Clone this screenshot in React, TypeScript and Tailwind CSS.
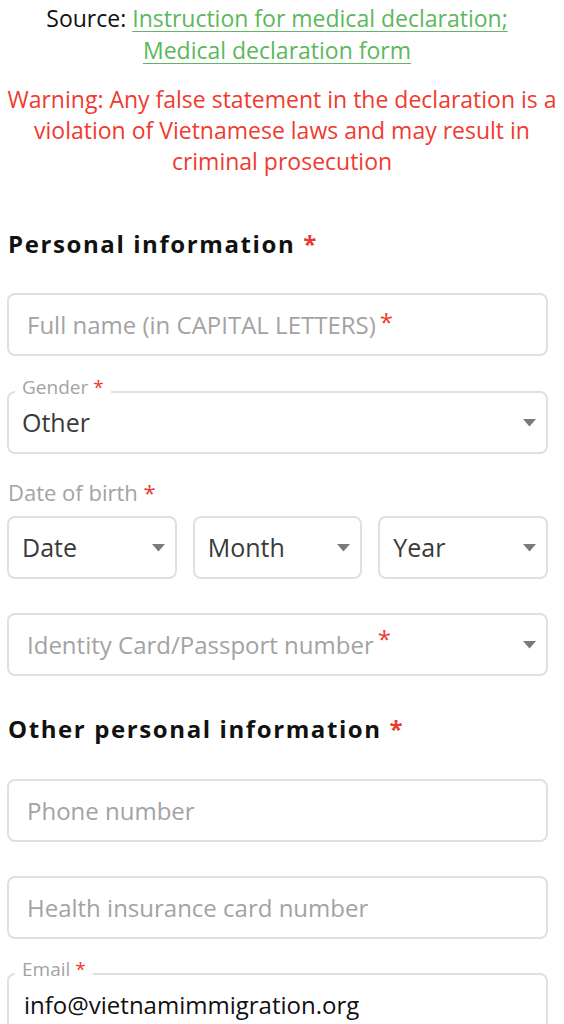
import React from 'react';

const font = { fontFamily: '"Open Sans", "Noto Sans", sans-serif' };

const Star = () => <span className="text-[#ea3a2f]">*</span>;

const Caret = () => (
  <svg width="13" height="8" viewBox="0 0 13 8" className="shrink-0">
    <path d="M0 0 L13 0 L6.5 7.5 Z" fill="#7a7a7a" />
  </svg>
);

const TextBox = ({ placeholder, required }: { placeholder: string; required?: boolean }) => (
  <div className="flex h-[63px] items-center rounded-[8px] border-2 border-[#e0e0e0] px-[18px] text-[24px] text-[#a3a3a3]">
    <span>{placeholder}</span>
    {required && (
      <span className="ml-[4px] -mt-[6px]">
        <Star />
      </span>
    )}
  </div>
);

const SelectBox = ({
  value,
  placeholder,
  required,
}: {
  value?: string;
  placeholder?: string;
  required?: boolean;
}) => (
  <div className="flex h-[63px] items-center justify-between rounded-[8px] border-2 border-[#e0e0e0] pl-[13px] pr-[10px]">
    {value ? (
      <span className="text-[25px] text-[#3a3a3a]">{value}</span>
    ) : (
      <span className="pl-[5px] text-[24px] text-[#a3a3a3]">
        {placeholder}
        {required && (
          <span className="ml-[4px] relative -top-[6px]">
            <Star />
          </span>
        )}
      </span>
    )}
    <Caret />
  </div>
);

const Floating = ({ label, children }: { label: string; children: React.ReactNode }) => (
  <div className="relative">
    <span className="absolute -top-[17px] left-[8px] bg-white px-[7px] text-[19px] leading-[26px] text-[#a3a3a3]">
      {label} <Star />
    </span>
    {children}
  </div>
);

export default function App() {
  return (
    <div className="min-h-[1024px] w-[564px] bg-white" style={font}>
      <div className="ml-[7px] w-[540px] pt-[2px]">
        <p className="text-center text-[23px] leading-[32px] text-[#111]">
          Source:{' '}
          <a className="text-[#5cb85c] underline decoration-1 underline-offset-[4px]" href="#">
            Instruction for medical declaration;
          </a>
          <br />
          <a className="text-[#5cb85c] underline decoration-1 underline-offset-[4px]" href="#">
            Medical declaration form
          </a>
        </p>
      </div>

      <p className="mx-auto mt-[18px] w-[556px] text-center text-[23px] leading-[31px] text-[#ef3b30]">
        Warning: Any false statement in the declaration is a violation of Vietnamese laws and may
        result in criminal prosecution
      </p>

      <div className="ml-[7px] w-[541px]">
        <h2 className="mt-[52px] pl-[1px] text-[24px] font-bold leading-[30px] tracking-[1.6px] text-[#111]">
          Personal information <Star />
        </h2>

        <div className="mt-[34px]">
          <TextBox placeholder="Full name (in CAPITAL LETTERS)" required />
        </div>

        <div className="mt-[35px]">
          <Floating label="Gender">
            <div className="flex h-[63px] items-center justify-between rounded-[8px] border-2 border-[#e0e0e0] pl-[13px] pr-[10px]">
              <span className="text-[25px] text-[#3a3a3a]">Other</span>
              <Caret />
            </div>
          </Floating>
        </div>

        <div className="mt-[24px] pl-[1px] text-[22px] leading-[28px] text-[#a3a3a3]">
          Date of birth <Star />
        </div>

        <div className="mt-[10px] grid grid-cols-3 gap-[16px]">
          <SelectBox value="Date" />
          <SelectBox value="Month" />
          <SelectBox value="Year" />
        </div>

        <div className="mt-[34px]">
          <SelectBox placeholder="Identity Card/Passport number" required />
        </div>

        <h2 className="mt-[38px] pl-[1px] text-[24px] font-bold leading-[30px] tracking-[1.6px] text-[#111]">
          Other personal information <Star />
        </h2>

        <div className="mt-[35px]">
          <TextBox placeholder="Phone number" />
        </div>

        <div className="mt-[34px]">
          <TextBox placeholder="Health insurance card number" />
        </div>

        <div className="mt-[34px]">
          <Floating label="Email">
            <div className="flex h-[63px] items-center rounded-[8px] border-2 border-[#e0e0e0] px-[15px]">
              <span className="text-[24px] text-[#111]">info@vietnamimmigration.org</span>
            </div>
          </Floating>
        </div>
      </div>
    </div>
  );
}
